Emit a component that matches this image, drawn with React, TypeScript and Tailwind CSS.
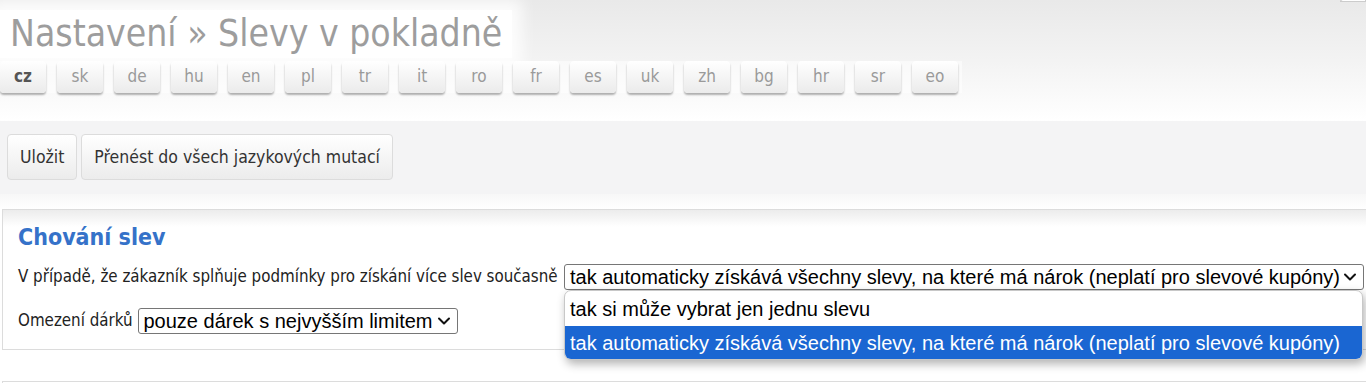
import React from "react";

const langs = ["cz","sk","de","hu","en","pl","tr","it","ro","fr","es","uk","zh","bg","hr","sr","eo"];

const Chevron = () => (
  <svg width="14" height="10" viewBox="0 0 14 10" className="shrink-0">
    <path d="M2 2.5 L7 7.5 L12 2.5" fill="none" stroke="#111" strokeWidth="2" strokeLinecap="round" strokeLinejoin="round" />
  </svg>
);

export default function App() {
  const tah = { fontFamily: "'DejaVu Sans Condensed', 'DejaVu Sans', sans-serif" };
  const ari = { fontFamily: "'Liberation Sans', Arial, sans-serif" };
  return (
    <div className="w-[1366px] h-[383px] bg-white overflow-hidden relative" style={tah}>
      {/* header */}
      <div className="h-[121px] bg-gradient-to-b from-[#e9e9e9] via-[#f3f3f3] to-white pt-[10px] relative">
        <div className="absolute right-0 top-[-1px] w-[26px] h-[3px] bg-white border border-[#ccc] rounded-tl-[3px]" />
        <div className="inline-block bg-white h-[48px] pl-[10px] pr-[10px] shadow-[0_0_14px_10px_rgba(255,255,255,0.85)]">
          <div className="text-[37px] leading-[48px] text-[#9d9d9d]">Nastavení » Slevy v pokladně</div>
        </div>
        <div className="flex gap-[11px] mt-[3px] w-[962px] bg-white/50">
          {langs.map((l, i) => (
            <div
              key={l}
              className={
                i === 0
                  ? "w-[46px] h-[32px] rounded-[4px] bg-gradient-to-b from-white to-[#ebebeb] shadow-[0_2px_2px_rgba(0,0,0,0.3)] flex items-center justify-center text-[17px] font-bold text-[#555]"
                  : "w-[46px] h-[32px] rounded-[4px] bg-gradient-to-b from-white to-[#ebebeb] shadow-[0_2px_2px_rgba(0,0,0,0.3)] flex items-center justify-center text-[17px] text-[#9a9a9a]"
              }
            >
              {l}
            </div>
          ))}
        </div>
      </div>

      {/* toolbar */}
      <div className="h-[73px] bg-[#f4f4f5] flex items-start gap-[4px] pl-[7px] pt-[13px]">
        <div className="h-[46px] px-[12px] flex items-center border border-[#dcdcdc] rounded-[4px] bg-gradient-to-b from-white to-[#ececec] text-[17.5px] text-[#333]">Uložit</div>
        <div className="h-[46px] px-[12px] flex items-center border border-[#dcdcdc] rounded-[4px] bg-gradient-to-b from-white to-[#ececec] text-[17.5px] text-[#333]">Přenést do všech jazykových mutací</div>
      </div>
      <div className="h-[15px] bg-gradient-to-b from-[#f7f7f7] to-white" />

      {/* section */}
      <div className="ml-[2px] h-[141px] border border-[#dcdcdc] border-r-0 bg-gradient-to-b from-[#ececec] via-white via-[12%] to-white pl-[15px] pt-[14px]">
        <div className="text-[23px] font-bold text-[#3572c9] leading-[26px]">Chování slev</div>
        <div className="flex items-center mt-[14px] h-[26px] text-[16.8px] text-[#222] whitespace-nowrap">
          <span className="mr-[5px] w-[541px] shrink-0">V případě, že zákazník splňuje podmínky pro získání více slev současně</span>
          <div className="w-[800px] shrink-0 h-[26px] border border-[#767676] rounded-[3px] flex items-center justify-between pl-[5px] pr-[6px] text-[20px] text-black" style={ari}>
            <span className="whitespace-nowrap">tak automaticky získává všechny slevy, na které má nárok (neplatí pro slevové kupóny)</span>
            <Chevron />
          </div>
        </div>
        <div className="flex items-center mt-[18px] h-[26px] text-[16.8px] text-[#222] whitespace-nowrap">
          <span className="mr-[5px]">Omezení dárků</span>
          <div className="w-[320px] h-[26px] border border-[#767676] rounded-[3px] flex items-center justify-between pl-[5px] pr-[6px] text-[20px] text-black" style={ari}>
            <span className="whitespace-nowrap">pouze dárek s nejvyšším limitem</span>
            <Chevron />
          </div>
        </div>
      </div>

      <div className="mt-[31px] ml-[2px] h-[10px] border-t border-l border-[#dcdcdc]" />

      {/* open dropdown */}
      <div className="absolute left-[564px] top-[290px] w-[799px] h-[70px] bg-white rounded-[7px] border border-[#c8c8c8] shadow-[2px_4px_10px_rgba(0,0,0,0.3)] overflow-hidden text-[20px]" style={ari}>
        <div className="h-[35px] flex items-center pl-[5px] text-black whitespace-nowrap">tak si může vybrat jen jednu slevu</div>
        <div className="h-[33px] flex items-center pl-[5px] bg-[#1a66d2] text-white whitespace-nowrap">tak automaticky získává všechny slevy, na které má nárok (neplatí pro slevové kupóny)</div>
      </div>
    </div>
  );
}
